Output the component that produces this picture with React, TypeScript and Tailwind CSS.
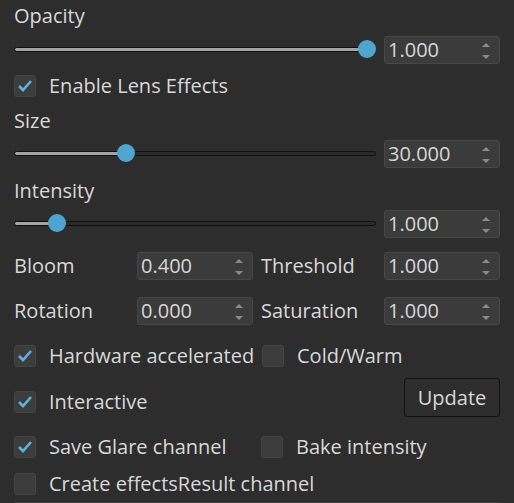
import React from "react";

const font = { fontFamily: '"Open Sans", "Noto Sans", sans-serif' };

const Spinner = ({ value }: { value: string }) => (
  <div className="relative flex h-[28px] w-[116px] shrink-0 items-center rounded-[3px] border border-[#474747] bg-[#3b3b3b] pl-[3px] text-[20px] text-[#d6d6d6]">
    <span className="leading-none">{value}</span>
    <svg className="absolute right-[9px] top-[5px]" width="8" height="18" viewBox="0 0 8 18">
      <polygon points="0,5 8,5 4,1" fill="#8a8a8a" />
      <polygon points="0,13 8,13 4,17" fill="#8a8a8a" />
    </svg>
  </div>
);

const Check = ({ checked }: { checked?: boolean }) => (
  <div className="flex h-[22px] w-[22px] shrink-0 items-center justify-center rounded-[3px] border border-[#454545] bg-[#3c3c3c]">
    {checked && (
      <svg width="16" height="14" viewBox="0 0 16 14">
        <polyline points="2,7 6,11 14,2" fill="none" stroke="#5eb1da" strokeWidth="2.6" />
      </svg>
    )}
  </div>
);

const CheckRow = ({ checked, label }: { checked?: boolean; label: string }) => (
  <div className="flex h-[28px] items-center gap-[13px]">
    <Check checked={checked} />
    <span className="whitespace-nowrap">{label}</span>
  </div>
);

const Slider = ({ value }: { value: number }) => {
  // thumb travels from 9px to 353px inside a 362px track
  const left = 9 + value * 344;
  return (
    <div className="relative h-[28px] w-[362px] shrink-0">
      <div className="absolute left-0 right-0 top-[11px] h-[5px] rounded-full border border-[#0f0f0f] bg-[#2a2a2a]" />
      <div
        className="absolute left-0 top-[11px] h-[5px] rounded-l-full border border-[#0f0f0f] bg-[#a3a3a3]"
        style={{ width: left }}
      />
      <div
        className="absolute top-[4px] h-[18px] w-[18px] -translate-x-1/2 rounded-full bg-[#4ea6d0]"
        style={{ left }}
      />
    </div>
  );
};

const SliderRow = ({ value, text, className }: { value: number; text: string; className: string }) => (
  <div className={`flex items-center gap-[8px] ${className}`}>
    <Slider value={value} />
    <Spinner value={text} />
  </div>
);

const Label = ({ text, className }: { text: string; className: string }) => (
  <div className={`flex h-[32px] items-center ${className}`}>{text}</div>
);

const Pair = ({ a, av, b, bv, className }: { a: string; av: string; b: string; bv: string; className: string }) => (
  <div className={`flex h-[28px] items-center ${className}`}>
    <span className="w-[123px]">{a}</span>
    <Spinner value={av} />
    <span className="ml-[8px] w-[123px]">{b}</span>
    <Spinner value={bv} />
  </div>
);

export default function App() {
  return (
    <div
      style={font}
      className="flex h-[503px] w-[514px] flex-col overflow-hidden bg-[#2d2d2d] px-[14px] text-[20px] text-[#d8d8d8]"
    >
      <Label text="Opacity" className="mt-0" />
      <SliderRow value={1} text="1.000" className="mt-[4px]" />
      <div className="mt-[8px]">
        <CheckRow checked label="Enable Lens Effects" />
      </div>
      <Label text="Size" className="mt-[5px]" />
      <SliderRow value={0.3} text="30.000" className="mt-[3px]" />
      <Label text="Intensity" className="mt-[7px]" />
      <SliderRow value={0.1} text="1.000" className="mt-[3px]" />
      <Pair a="Bloom" av="0.400" b="Threshold" bv="1.000" className="mt-[14px]" />
      <Pair a="Rotation" av="0.000" b="Saturation" bv="1.000" className="mt-[17px]" />
      <div className="mt-[17px] flex">
        <div className="w-[248px]">
          <CheckRow checked label="Hardware accelerated" />
        </div>
        <CheckRow label="Cold/Warm" />
      </div>
      <div className="mt-[8px] flex items-start justify-between">
        <div className="mt-[10px]">
          <CheckRow checked label="Interactive" />
        </div>
        <button className="h-[39px] w-[96px] rounded-[3px] border border-[#111] bg-[#2d2d2d] text-[20px] text-[#d8d8d8]">
          Update
        </button>
      </div>
      <div className="mt-[16px] flex">
        <div className="w-[247px]">
          <CheckRow checked label="Save Glare channel" />
        </div>
        <CheckRow label="Bake intensity" />
      </div>
      <div className="mt-[9px]">
        <CheckRow label="Create effectsResult channel" />
      </div>
      <div className="mt-[4px] h-px bg-[#3e3e3e]" />
    </div>
  );
}
